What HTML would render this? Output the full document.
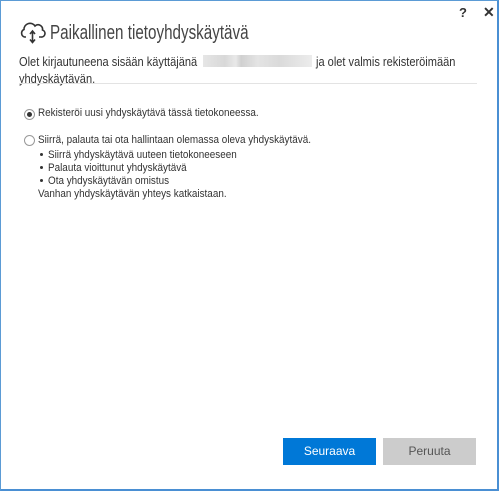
<!DOCTYPE html>
<html><head><meta charset="utf-8"><style>
body{margin:0;width:500px;height:492px;overflow:hidden;background:#fff;font-family:"Liberation Sans",sans-serif;position:relative}
.win{position:absolute;left:0;top:0;width:496px;height:488px;border:1px solid #5b9bd5;border-right:2px solid #4a8fd3;border-bottom:2px solid #4a8fd3}
.a{position:absolute;white-space:nowrap;transform-origin:0 0}
.t{font-size:11px;color:#333;transform:scaleX(0.9)}
.d{font-size:13px;color:#333;transform:scaleX(0.85)}
.radio{position:absolute;width:9px;height:9px;border:1px solid #999;border-radius:50%;background:#fff}
.dot{position:absolute;width:3px;height:3px;background:#333;border-radius:50%}
.btn{position:absolute;top:438px;width:93px;height:27px;font-size:12px;text-align:center;line-height:27px}
</style></head><body>
<div class="win"></div>
<div class="a" style="left:459px;top:5px;font-size:13px;font-weight:bold;color:#333">?</div>
<div class="a" style="left:483px;top:4px;font-size:14px;font-weight:bold;color:#333">✕</div>
<svg class="a" style="left:19px;top:20px" width="28" height="24" viewBox="0 0 28 24" fill="none" stroke="#333" stroke-width="1.6">
<path d="M7 17H5.5A4 4 0 0 1 5 9.5 6 6 0 0 1 16 6a4.5 4.5 0 0 1 7.5 4A3.6 3.6 0 0 1 22 17h-2"/>
<path d="M13.5 11v11M11 14l2.5-3 2.5 3M11 19.5l2.5 3 2.5-3"/></svg>
<div class="a" style="left:50px;top:22px;font-size:20px;color:#444;transform:scaleX(0.76)">Paikallinen tietoyhdyskäytävä</div>
<div class="a d" style="left:19px;top:54px">Olet kirjautuneena sisään käyttäjänä</div>
<div class="a" style="left:203px;top:55px;width:109px;height:12px;background:linear-gradient(90deg,#e6e6e6,#d8d8d8 20%,#e9e9e9 30%,#d0d0d0 35%,#e4e4e4 50%,#dadada 70%,#ececec)"></div>
<div class="a d" style="left:316px;top:54px">ja olet valmis rekisteröimään</div>
<div class="a d" style="left:19px;top:71px">yhdyskäytävän.</div>
<div class="a" style="left:19px;top:83px;width:458px;height:1px;background:#e3e3e3"></div>
<div class="radio" style="left:24px;top:109px"></div><div class="a" style="left:27px;top:112px;width:5px;height:5px;border-radius:50%;background:#333"></div>
<div class="a t" style="left:38px;top:107px">Rekisteröi uusi yhdyskäytävä tässä tietokoneessa.</div>
<div class="radio" style="left:24px;top:135px"></div>
<div class="a t" style="left:38px;top:134px">Siirrä, palauta tai ota hallintaan olemassa oleva yhdyskäytävä.</div>
<div class="dot" style="left:40px;top:153px"></div><div class="a t" style="left:48px;top:149px">Siirrä yhdyskäytävä uuteen tietokoneeseen</div>
<div class="dot" style="left:40px;top:166px"></div><div class="a t" style="left:48px;top:162px">Palauta vioittunut yhdyskäytävä</div>
<div class="dot" style="left:40px;top:179px"></div><div class="a t" style="left:48px;top:175px">Ota yhdyskäytävän omistus</div>
<div class="a t" style="left:38px;top:188px">Vanhan yhdyskäytävän yhteys katkaistaan.</div>
<div class="btn" style="left:283px;background:#0078d7;color:#fff">Seuraava</div>
<div class="btn" style="left:383px;background:#cccccc;color:#555">Peruuta</div>
</body></html>
